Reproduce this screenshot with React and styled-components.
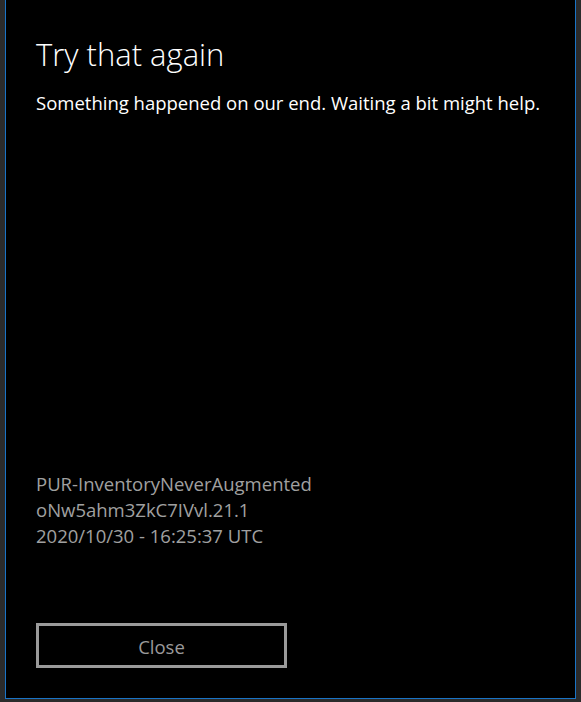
import React from "react";
import styled, { createGlobalStyle } from "styled-components";

const Global = createGlobalStyle`
  html, body { margin: 0; padding: 0; background: #2b2b2b; }
  body { width: 581px; height: 702px; overflow: hidden; }
  #root { height: 100%; }
`;

const Page = styled.div`
  box-sizing: border-box;
  height: 702px;
  padding: 0 5px 3px 5px;
  display: flex;
`;

const Dialog = styled.div`
  box-sizing: border-box;
  flex: 1;
  background: #000;
  border: 1px solid #1a74c6;
  border-top: none;
  display: flex;
  flex-direction: column;
  padding: 0 30px 30px 30px;
  font-family: "Open Sans", "Noto Sans", sans-serif;
`;

const Title = styled.h1`
  margin: 34px 0 0 0;
  font-weight: 300;
  font-size: 31px;
  line-height: 40px;
  color: #fff;
`;

const Message = styled.p`
  margin: 17px 0 0 0;
  font-size: 18.5px;
  line-height: 24px;
  color: #fff;
  white-space: nowrap;
`;

const Spacer = styled.div`
  flex: 1;
`;

const Details = styled.div`
  display: flex;
  flex-direction: column;
  color: #a0a0a0;
  font-size: 18.5px;
  line-height: 26px;
`;

const Button = styled.button`
  box-sizing: border-box;
  margin-top: 74px;
  width: 251px;
  height: 45px;
  background: #000;
  border: 3px solid #9a9a9a;
  color: #9a9a9a;
  font-family: inherit;
  font-size: 18.5px;
  padding: 2px 0 0 0;
`;

export default function App() {
  return (
    <>
      <Global />
      <Page>
        <Dialog>
          <Title>Try that again</Title>
          <Message>Something happened on our end. Waiting a bit might help.</Message>
          <Spacer />
          <Details>
            <span>PUR-InventoryNeverAugmented</span>
            <span>oNw5ahm3ZkC7IVvl.21.1</span>
            <span>2020/10/30 - 16:25:37 UTC</span>
          </Details>
          <Button>Close</Button>
        </Dialog>
      </Page>
    </>
  );
}
